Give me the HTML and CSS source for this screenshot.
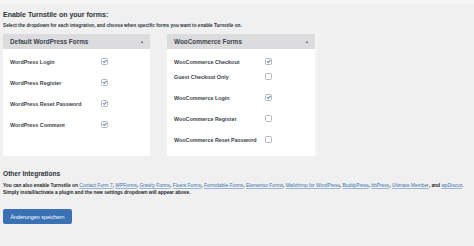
FILE: index.html
```html
<!DOCTYPE html>
<html>
<head>
    <title>Turnstile Settings</title>
    <link rel="stylesheet" href="styles.css">
</head>
<body>
    <div class="wrap">
        <h2 class="title">Enable Turnstile on your forms:</h2>
        <p class="desc">Select the dropdown for each integration, and choose when specific forms you want to enable Turnstile on.</p>

        <div class="panels">
            <!-- WordPress -->
            <div class="panel">
                <div class="panel-head">Default WordPress Forms <span class="caret">▲</span></div>
                <div class="panel-body left-body">
                    <div class="row"><span>WordPress Login</span><span class="check on"></span></div>
                    <div class="row"><span>WordPress Register</span><span class="check on"></span></div>
                    <div class="row"><span>WordPress Reset Password</span><span class="check on"></span></div>
                    <div class="row"><span>WordPress Comment</span><span class="check on"></span></div>
                </div>
            </div>

            <!-- WooCommerce -->
            <div class="panel">
                <div class="panel-head">WooCommerce Forms <span class="caret">▲</span></div>
                <div class="panel-body right-body">
                    <div class="row"><span>WooCommerce Checkout</span><span class="check on"></span></div>
                    <div class="row sub"><span>Guest Checkout Only</span><span class="check"></span></div>
                    <div class="row"><span>WooCommerce Login</span><span class="check on"></span></div>
                    <div class="row"><span>WooCommerce Register</span><span class="check"></span></div>
                    <div class="row"><span>WooCommerce Reset Password</span><span class="check"></span></div>
                </div>
            </div>
        </div>

        <h3 class="other">Other Integrations</h3>
        <p class="info">You can also enable Turnstile on <a href="#">Contact Form 7</a>, <a href="#">WPForms</a>, <a href="#">Gravity Forms</a>, <a href="#">Fluent Forms</a>, <a href="#">Formidable Forms</a>, <a href="#">Elementor Forms</a>, <a href="#">Mailchimp for WordPress</a>, <a href="#">BuddyPress</a>, <a href="#">bbPress</a>, <a href="#">Ultimate Member</a>, and <a href="#">wpDiscuz</a>.<br>Simply install/activate a plugin and the new settings dropdown will appear above.</p>

        <button class="save-btn">Änderungen speichern</button>
    </div>
</body>
</html>
```

FILE: styles.css
```css
body {
    margin: 0;
    background: #f0f0f1;
    font-family: "Liberation Sans", Arial, sans-serif;
    color: #1d2327;
}
.wrap { padding: 0 3px; border-top: 4px solid #f5f5f5; }

.title { font-size: 7px; font-weight: bold; margin: 7px 0 0; line-height: 8px; color: #2c3338; }
.desc { font-size: 4.7px; font-weight: bold; margin: 4px 0 0; line-height: 6px; color: #2c3338; }

.panels { display: flex; gap: 17px; margin-top: 5px; }
.panel { width: 147px; background: #fff; }
.panel + .panel { width: 148px; box-shadow: 3px 0 0 #f4f4f5; }
.panel-head {
    height: 15px;
    background: #dcdcde;
    display: flex;
    align-items: center;
    justify-content: space-between;
    padding: 0 6px 0 7px;
    font-size: 6.4px;
    font-weight: bold;
    color: #3c434a;
}
.caret { font-size: 4px; color: #646970; }

.panel-body { padding: 2px 0 3px; }
.right-body { padding-bottom: 6px; }
.row {
    height: 21px;
    display: grid;
    grid-template-columns: 91px 6px;
    align-items: center;
    padding-left: 7px;
    font-size: 5.4px;
    font-weight: bold;
    color: #3c434a;
}
.row.sub { margin-top: -6px; }
.check {
    width: 5px;
    height: 5px;
    border: 0.7px solid #b4b7bb;
    border-radius: 1.5px;
    background: #fff;
    position: relative;
}
.check.on::after {
    content: "";
    position: absolute;
    left: 1.6px;
    top: 0.4px;
    width: 1.3px;
    height: 2.6px;
    border: solid #5b8fc4;
    border-width: 0 0.7px 0.7px 0;
    transform: rotate(45deg);
}

.other { font-size: 6.6px; font-weight: bold; margin: 14px 0 0; line-height: 8px; color: #2c3338; }
.info { font-size: 4.85px; font-weight: bold; line-height: 7px; margin: 4px 0 0; color: #1d2327; }
.info a { color: #3a72ad; font-weight: normal; text-decoration-color: #9bb6d3; }

.save-btn {
    margin-top: 13px;
    width: 69px;
    height: 15px;
    background: #3a70b4;
    border: none;
    border-radius: 2px;
    color: #fff;
    font-family: "Liberation Sans", Arial, sans-serif;
    font-size: 5.4px;
    padding: 0;
}
```
